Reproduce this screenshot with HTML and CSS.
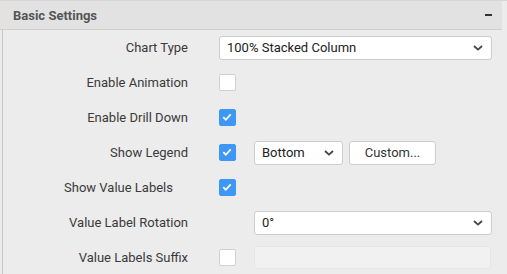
FILE: index.html
```html
<!DOCTYPE html>
<html>
<head>
<meta charset="utf-8">
<link rel="stylesheet" href="styles.css">
</head>
<body>
<div class="panel">
  <div class="header">
    <span class="title">Basic Settings</span>
    <span class="collapse"></span>
  </div>
  <div class="body">
    <div class="row">
      <label class="lbl">Chart Type</label>
      <div class="ctrl">
        <div class="select wide"><span>100% Stacked Column</span><svg class="chev" width="10" height="6" viewBox="0 0 10 6"><path d="M1 1l4 3.6L9 1" fill="none" stroke="#444" stroke-width="1.8"/></svg></div>
      </div>
    </div>
    <div class="row">
      <label class="lbl">Enable Animation</label>
      <div class="ctrl"><span class="cb"></span></div>
    </div>
    <div class="row">
      <label class="lbl">Enable Drill Down</label>
      <div class="ctrl"><span class="cb on"><svg width="16" height="16" viewBox="0 0 16 16"><path d="M4.3 8.2l2.5 2.6 4.9-5.4" fill="none" stroke="#fff" stroke-width="1.8"/></svg></span></div>
    </div>
    <div class="row">
      <label class="lbl">Show Legend</label>
      <div class="ctrl">
        <span class="cb on"><svg width="16" height="16" viewBox="0 0 16 16"><path d="M4.3 8.2l2.5 2.6 4.9-5.4" fill="none" stroke="#fff" stroke-width="1.8"/></svg></span>
        <div class="select small"><span>Bottom</span><svg class="chev" width="10" height="6" viewBox="0 0 10 6"><path d="M1 1l4 3.6L9 1" fill="none" stroke="#444" stroke-width="1.8"/></svg></div>
        <button class="btn">Custom...</button>
      </div>
    </div>
    <div class="row">
      <label class="lbl short">Show Value Labels</label>
      <div class="ctrl"><span class="cb on"><svg width="16" height="16" viewBox="0 0 16 16"><path d="M4.3 8.2l2.5 2.6 4.9-5.4" fill="none" stroke="#fff" stroke-width="1.8"/></svg></span></div>
    </div>
    <div class="row">
      <label class="lbl">Value Label Rotation</label>
      <div class="ctrl indent">
        <div class="select fill"><span>0°</span><svg class="chev" width="10" height="6" viewBox="0 0 10 6"><path d="M1 1l4 3.6L9 1" fill="none" stroke="#444" stroke-width="1.8"/></svg></div>
      </div>
    </div>
    <div class="row">
      <label class="lbl">Value Labels Suffix</label>
      <div class="ctrl">
        <span class="cb"></span>
        <div class="input disabled"></div>
      </div>
    </div>
  </div>
</div>
</body>
</html>
```
FILE: styles.css
```css
html, body {
  margin: 0;
  padding: 0;
  background: #ececec;
  font-family: Roboto, "Liberation Sans", sans-serif;
  font-size: 13px;
  color: #3a3a3a;
}
.panel {
  width: 507px;
  height: 274px;
  overflow: hidden;
  border-top: 1px solid #d6d6d6;
  box-sizing: border-box;
}
.header {
  width: 502px;
  height: 28px;
  background: #e2e2e2;
  border-bottom: 1px solid #cfcfcf;
  display: flex;
  align-items: center;
  justify-content: space-between;
  box-sizing: content-box;
}
.title {
  font-weight: 700;
  color: #555;
  padding-left: 13px;
}
.collapse {
  width: 7px;
  height: 2px;
  background: #333;
  margin-right: 10px;
}
.body {
  margin-left: 2px;
  border-left: 1px solid #c8c8c8;
  height: 245px;
}
.row {
  display: grid;
  grid-template-columns: 185px 273px;
  column-gap: 31px;
  height: 35px;
  align-items: center;
}
.lbl {
  text-align: right;
}
.lbl.short {
  padding-right: 15px;
}
.ctrl {
  display: flex;
  align-items: center;
}
.ctrl.indent {
  padding-left: 35px;
}
.cb {
  width: 15px;
  height: 15px;
  border: 1px solid #d0d0d0;
  border-radius: 2px;
  background: #fff;
  flex: none;
  position: relative;
}
.cb.on {
  background: #3d97f5;
  border-color: #3d97f5;
}
.cb svg {
  position: absolute;
  left: -1px;
  top: -1px;
}
.select {
  height: 22px;
  border: 1px solid #cdcdcd;
  border-radius: 3px;
  background: #fff;
  display: flex;
  align-items: center;
  justify-content: space-between;
  padding: 0 8px 0 7px;
  color: #222;
  box-sizing: content-box;
}
.select.wide {
  width: 256px;
}
.select.fill {
  width: 222px;
}
.select.small {
  width: 72px;
  margin-left: 18px;
}
.btn {
  margin-left: 6px;
  width: 87px;
  height: 24px;
  border: 1px solid #cdcdcd;
  border-radius: 3px;
  background: #fff;
  font-family: Roboto, "Liberation Sans", sans-serif;
  font-size: 13px;
  color: #333;
  padding: 0;
}
.input {
  margin-left: 18px;
  width: 237px;
  height: 23px;
  border-radius: 3px;
}
.input.disabled {
  background: #f1f1f1;
  border: 1px solid #e6e6e6;
  box-sizing: border-box;
}
```
